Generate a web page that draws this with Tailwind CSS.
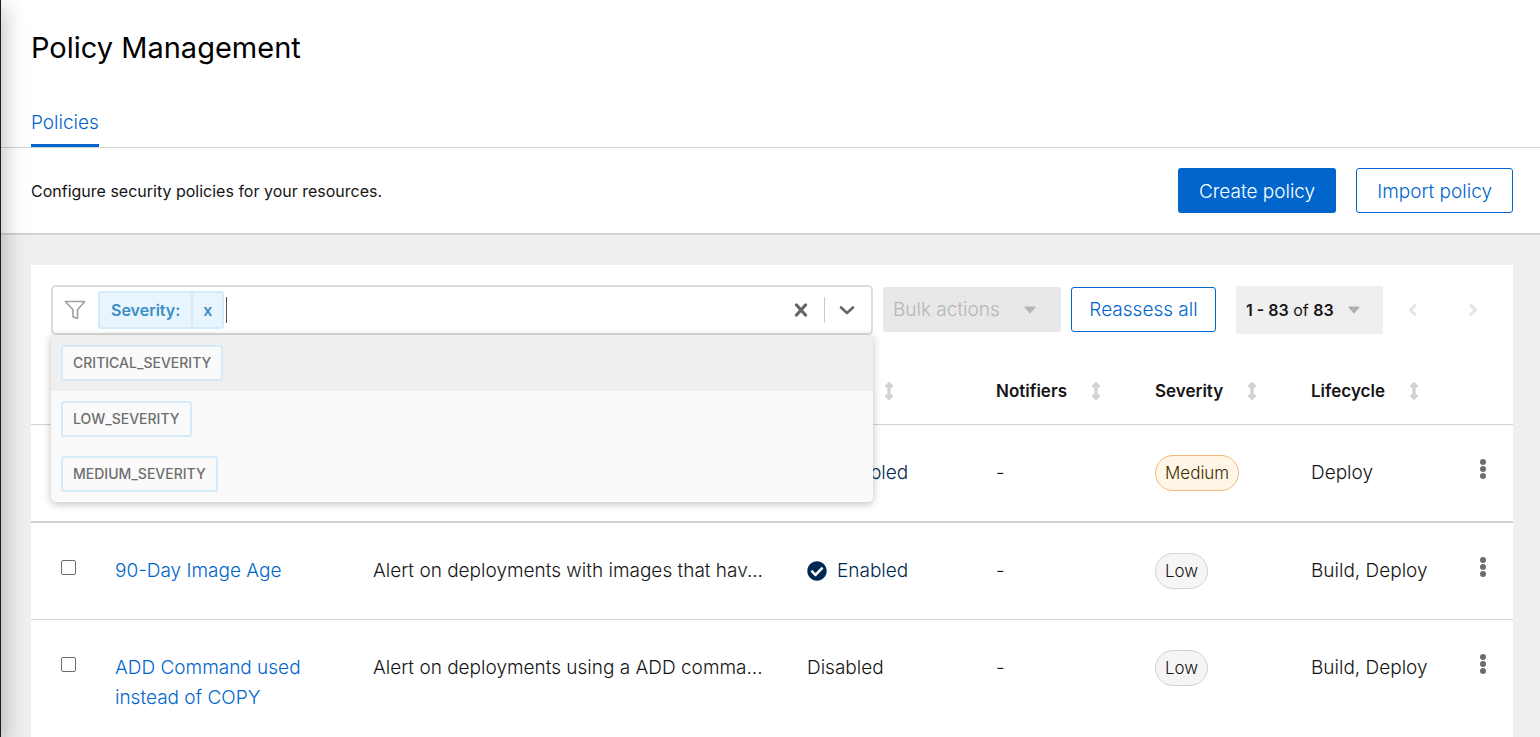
<!DOCTYPE html>
<html lang="en">
<head>
<meta charset="utf-8">
<title>Policy Management</title>
<script src="https://cdn.jsdelivr.net/npm/@tailwindcss/browser@4"></script>
</head>
<body class="flex h-screen overflow-hidden bg-[#efefef] font-['Inter',sans-serif] text-[19px] leading-[30px] font-light text-[#151515]">
<svg class="hidden" aria-hidden="true">
  <symbol id="sort" viewBox="0 0 10 20"><path d="M4.300 1.300a1 1 0 0 1 1.400 0l3 3C9.600 5.200 9 6.500 8 6.500H6.700v7H8c1 0 1.600 1.300.7 2.200l-3 3a1 1 0 0 1-1.400 0l-3-3C.4 14.800 1 13.500 2 13.500h1.300v-7H2C1 6.500.4 5.200 1.300 4.300z"/></symbol>
  <symbol id="caret" viewBox="0 0 12 8"><path d="M1.200.5h9.600c.7 0 1 .8.5 1.300L6.600 6.900a.9.9 0 0 1-1.200 0L.7 1.800C.2 1.300.5.5 1.200.5z"/></symbol>
  <symbol id="kebab" viewBox="0 0 6 20"><circle cx="3" cy="3" r="3"/><circle cx="3" cy="10" r="3"/><circle cx="3" cy="17" r="3"/></symbol>
  <symbol id="check" viewBox="0 0 512 512"><path d="M504 256c0 136.967-111.033 248-248 248S8 392.967 8 256 119.033 8 256 8s248 111.033 248 248zM227.314 387.314l184-184c6.248-6.248 6.248-16.379 0-22.627l-22.627-22.627c-6.248-6.249-16.379-6.249-22.628 0L216 308.118l-70.059-70.059c-6.248-6.248-16.379-6.248-22.628 0l-22.627 22.627c-6.248 6.248-6.248 16.379 0 22.627l104 104c6.249 6.249 16.379 6.249 22.628.001z"/></symbol>
</svg>

<aside class="z-20 -ml-[290px] w-[291px] shrink-0 bg-[#1b1d21] shadow-[4px_8px_20px_rgba(40,20,15,0.25)]"></aside>

<main class="min-w-0 flex-1">
  <header class="border-b-2 border-[#d2d2d2] bg-white">
    <h1 class="px-[30px] pt-7 text-[29px] leading-10 font-normal text-black">Policy Management</h1>
    <nav class="flex border-b border-[#d2d2d2] px-[30px] pt-8">
      <a href="#" class="border-b-3 border-[#0066cc] pt-2 pb-1.5 text-[#0066cc]">Policies</a>
    </nav>
    <div class="flex items-center gap-5 py-5 pr-[27px] pl-[30px]">
      <p class="flex-1 text-base font-normal">Configure security policies for your resources.</p>
      <button class="h-[45px] rounded-[3px] bg-[#0066cc] px-[21px] pt-0.5 text-white">Create policy</button>
      <button class="h-[45px] rounded-[3px] border border-[#0066cc] px-5 pt-0.5 text-[#0066cc]">Import policy</button>
    </div>
  </header>

  <section class="mt-[30px] mr-[27px] ml-[30px] bg-white">
    <div class="flex items-center px-5 pt-5">
      <div class="relative min-w-0 flex-1">
        <div class="flex h-[50px] items-center rounded-[5px] border-2 border-[#dcdcdc] bg-white pr-4 pl-[11px]">
          <svg class="mr-3 h-5 w-[22px] fill-none stroke-[#a0a0a0]" viewBox="0 0 22 20" stroke-width="1.600" stroke-linejoin="round"><path d="M1.300 1.500h19.400l-7.200 8.300v8.700l-4.500-1.700V9.800z"/></svg>
          <span class="flex h-[38px] items-center rounded-[3px] border-2 border-[#d5ebfa] bg-[#e9f5fe] text-base leading-[34px] font-semibold text-[#3a8dc4]">
            <span class="border-r-2 border-[#d5ebfa] px-[11px]">Severity:</span>
            <button class="w-[29px] leading-[34px]" aria-label="Remove Severity">x</button>
          </span>
          <span class="ml-0.5 h-[26px] w-px bg-[#555]"></span>
          <input class="min-w-0 flex-1 bg-transparent outline-none" aria-label="Filter policies">
          <button class="mr-4" aria-label="Clear"><svg class="h-3.5 w-3.5 stroke-[#666]" viewBox="0 0 14 14" stroke-width="3.200" stroke-linecap="round"><path d="m2.500 2 9 10M11.500 2l-9 10"/></svg></button>
          <span class="h-[26px] w-px bg-[#ccc]"></span>
          <button class="ml-3.5" aria-label="Open"><svg class="h-4 w-4 fill-none stroke-[#666]" viewBox="0 0 16 16" stroke-width="2.600" stroke-linecap="round" stroke-linejoin="round"><path d="m2 5.500 6 5.500 6-5.500"/></svg></button>
        </div>
        <div role="listbox" class="absolute top-full left-0 z-10 w-full overflow-hidden rounded-b-[5px] bg-[#fafafa] text-sm font-medium text-[#6e6e6e] shadow-[0_2px_8px_rgba(0,0,0,0.25)]">
          <button role="option" class="flex h-14 w-full items-center bg-[#efefef] px-2.5"><span class="h-9 rounded-[3px] border-2 border-[#d5ebfa] bg-[#fafafa] px-2.5 leading-8">CRITICAL_SEVERITY</span></button>
          <button role="option" class="flex h-[55px] w-full items-center px-2.5"><span class="h-9 rounded-[3px] border-2 border-[#d5ebfa] px-2.5 leading-8">LOW_SEVERITY</span></button>
          <button role="option" class="flex h-14 w-full items-center px-2.5"><span class="h-9 rounded-[3px] border-2 border-[#d5ebfa] px-2.5 leading-8">MEDIUM_SEVERITY</span></button>
        </div>
      </div>
      <button disabled class="mb-0.5 ml-2.5 flex h-[45px] w-[178px] items-center gap-6 rounded-[3px] bg-[#e8e8e8] pt-0.5 pl-2.5 text-[#b4b6b9]">Bulk actions<svg class="h-2 w-3 fill-[#b4b6b9]"><use href="#caret"/></svg></button>
      <button class="mb-0.5 ml-2.5 h-[45px] w-[145px] rounded-[3px] border border-[#0066cc] pt-0.5 text-[#0066cc]">Reassess all</button>
      <button class="ml-5 flex h-12 w-[147px] items-center gap-3.5 bg-[#efefef] pl-2.5 text-base"><span class="font-normal"><b class="font-semibold">1 - 83</b> of <b class="font-semibold">83</b></span><svg class="h-2 w-3 fill-[#adafb3]"><use href="#caret"/></svg></button>
      <button disabled class="ml-6" aria-label="Previous page"><svg class="h-3.5 w-3 fill-none stroke-[#e4e4e4]" viewBox="0 0 12 14" stroke-width="2.800"><path d="M9 1.500 3.500 7 9 12.500"/></svg></button>
      <button disabled class="mr-3.5 ml-12" aria-label="Next page"><svg class="h-3.5 w-3 fill-none stroke-[#e4e4e4]" viewBox="0 0 12 14" stroke-width="2.800"><path d="m3 1.500 5.500 5.500L3 12.500"/></svg></button>
    </div>

    <table class="w-full table-fixed text-left">
      <colgroup><col class="w-[84px]"><col class="w-[258px]"><col><col class="w-[189px]"><col class="w-[159px]"><col class="w-[156px]"><col class="w-[169px]"><col class="w-[33px]"></colgroup>
      <thead class="border-b border-[#d2d2d2] text-[17px] leading-[30px]">
        <tr>
          <th class="h-[89px] pt-11 pb-4 pl-[30px]"><input type="checkbox" aria-label="Select all" class="block h-[15px] w-[15px] appearance-none rounded-[2px] border border-[#6a6e73] bg-white"></th>
          <th class="pt-[39px] pb-4 font-semibold">Policy</th>
          <th class="pt-[39px] pb-4 font-semibold">Description</th>
          <th class="pt-[39px] pb-4 font-semibold"><button class="flex items-center gap-6">Status<svg class="h-5 w-2.5 fill-[#d2d2d2]"><use href="#sort"/></svg></button></th>
          <th class="pt-[39px] pb-4 font-semibold"><button class="flex items-center gap-6">Notifiers<svg class="h-5 w-2.5 fill-[#d2d2d2]"><use href="#sort"/></svg></button></th>
          <th class="pt-[39px] pb-4 font-semibold"><button class="flex items-center gap-6">Severity<svg class="h-5 w-2.5 fill-[#d2d2d2]"><use href="#sort"/></svg></button></th>
          <th class="pt-[39px] pb-4 font-semibold"><button class="flex items-center gap-6">Lifecycle<svg class="h-5 w-2.5 fill-[#d2d2d2]"><use href="#sort"/></svg></button></th>
          <th></th>
        </tr>
      </thead>
      <tbody class="align-top">
        <tr class="border-b-2 border-[#d2d2d2]">
          <td class="pt-[37px] pl-[30px]"><input type="checkbox" aria-label="Select policy" class="block h-[15px] w-[15px] appearance-none rounded-[2px] border border-[#6a6e73] bg-white"></td>
          <td></td>
          <td></td>
          <td class="py-[33px] text-[#002952]"><span class="flex items-center gap-2.5"><svg class="h-5 w-5 fill-[#002952]"><use href="#check"/></svg>Enabled</span></td>
          <td class="py-[33px]">-</td>
          <td class="pt-[30px]"><span class="inline-block h-9 rounded-full border border-[#f4b678] bg-[#fff6e8] px-[9px] text-[17px] leading-[34px] text-[#3d2c00]">Medium</span></td>
          <td class="py-[33px]">Deploy</td>
          <td class="pt-[34px]"><button class="block" aria-label="Actions"><svg class="h-5 w-1.5 fill-[#6a6e73]"><use href="#kebab"/></svg></button></td>
        </tr>
        <tr class="border-b border-[#d2d2d2]">
          <td class="pt-[37px] pl-[30px]"><input type="checkbox" aria-label="Select 90-Day Image Age" class="block h-[15px] w-[15px] appearance-none rounded-[2px] border border-[#6a6e73] bg-white"></td>
          <td class="py-[33px]"><a href="#" class="text-[#0066cc]">90-Day Image Age</a></td>
          <td class="py-[33px] whitespace-nowrap">Alert on deployments with images that hav...</td>
          <td class="py-[33px] text-[#002952]"><span class="flex items-center gap-2.5"><svg class="h-5 w-5 fill-[#002952]"><use href="#check"/></svg>Enabled</span></td>
          <td class="py-[33px]">-</td>
          <td class="pt-[30px]"><span class="inline-block h-9 rounded-full border border-[#d2d2d2] bg-[#f5f5f5] px-[9px] text-[17px] leading-[34px]">Low</span></td>
          <td class="py-[33px]">Build, Deploy</td>
          <td class="pt-[34px]"><button class="block" aria-label="Actions"><svg class="h-5 w-1.5 fill-[#6a6e73]"><use href="#kebab"/></svg></button></td>
        </tr>
        <tr class="border-b border-[#d2d2d2]">
          <td class="pt-[37px] pl-[30px]"><input type="checkbox" aria-label="Select ADD Command used instead of COPY" class="block h-[15px] w-[15px] appearance-none rounded-[2px] border border-[#6a6e73] bg-white"></td>
          <td class="py-[33px] pr-12"><a href="#" class="text-[#0066cc]">ADD Command used instead of COPY</a></td>
          <td class="py-[33px] whitespace-nowrap">Alert on deployments using a ADD comma...</td>
          <td class="py-[33px]">Disabled</td>
          <td class="py-[33px]">-</td>
          <td class="pt-[30px]"><span class="inline-block h-9 rounded-full border border-[#d2d2d2] bg-[#f5f5f5] px-[9px] text-[17px] leading-[34px]">Low</span></td>
          <td class="py-[33px]">Build, Deploy</td>
          <td class="pt-[34px]"><button class="block" aria-label="Actions"><svg class="h-5 w-1.5 fill-[#6a6e73]"><use href="#kebab"/></svg></button></td>
        </tr>
      </tbody>
    </table>
  </section>
</main>
</body>
</html>
